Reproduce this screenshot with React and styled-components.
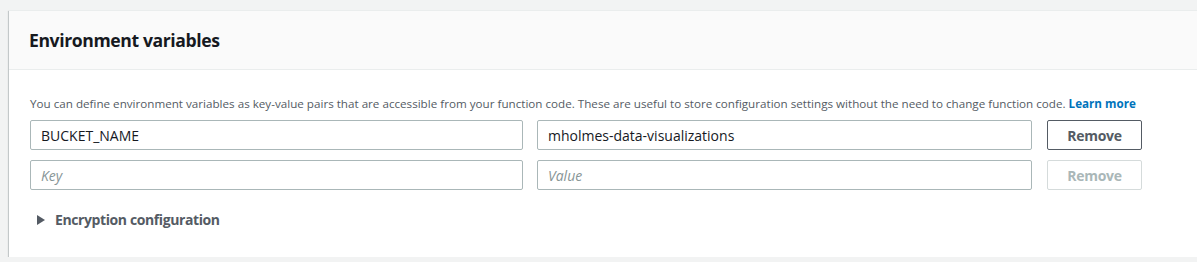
import React from 'react';
import styled, { createGlobalStyle } from 'styled-components';

const GlobalStyle = createGlobalStyle`
  body {
    margin: 0;
    background: #f2f3f3;
    font-family: "Open Sans", "Liberation Sans", sans-serif;
    overflow: hidden;
  }
`;

const Page = styled.div`
  padding: 10px 0 0 9px;
  width: 1220px;
`;

const Panel = styled.section`
  background: #fff;
  border-top: 1px solid #eaeded;
  box-shadow: 0 1px 1px 0 rgba(0, 28, 36, 0.3), 1px 1px 1px 0 rgba(0, 28, 36, 0.15),
    -1px 1px 1px 0 rgba(0, 28, 36, 0.15);
`;

const Header = styled.header`
  display: flex;
  align-items: center;
  height: 58px;
  padding: 0 20px;
  background: #fafafa;
  border-bottom: 1px solid #eaeded;

  h2 {
    margin: 0;
    font-size: 17.6px;
    font-weight: 700;
    color: #16191f;
    letter-spacing: -0.4px;
  }
`;

const Body = styled.div`
  padding: 25px 20px 27px 21px;
`;

const Description = styled.p`
  margin: 0 0 8px;
  font-size: 11.65px;
  line-height: 17px;
  color: #545b64;

  a {
    color: #0073bb;
    font-weight: 700;
    text-decoration: none;
  }
`;

const VarGrid = styled.div`
  display: grid;
  grid-template-columns: 493px 495px 96px;
  column-gap: 14px;
  row-gap: 10px;
`;

const TextInput = styled.input`
  box-sizing: border-box;
  height: 30px;
  width: 100%;
  padding: 0 10px;
  border: 1px solid #aab7b8;
  border-radius: 2px;
  background: #fff;
  font-family: inherit;
  font-size: 14px;
  color: #16191f;
  outline: none;

  &::placeholder {
    color: #879596;
    font-style: italic;
  }
`;

const RemoveButton = styled.button`
  box-sizing: border-box;
  height: 30px;
  margin-left: 1px;
  border: 1px solid ${({ disabled }) => (disabled ? '#d5dbdb' : '#545b64')};
  border-radius: 2px;
  background: #fff;
  font-family: inherit;
  font-size: 14px;
  font-weight: 700;
  letter-spacing: -0.3px;
  color: ${({ disabled }) => (disabled ? '#aab7b8' : '#545b64')};
  cursor: ${({ disabled }) => (disabled ? 'default' : 'pointer')};
`;

const Expander = styled.div`
  display: flex;
  align-items: center;
  gap: 10px;
  margin-top: 20px;
  padding-left: 7px;
  font-size: 14px;
  line-height: 20px;
  font-weight: 700;
  letter-spacing: -0.4px;
  color: #545b64;
`;

const Caret = styled.span`
  width: 0;
  height: 0;
  border-top: 5px solid transparent;
  border-bottom: 5px solid transparent;
  border-left: 8px solid #545b64;
`;

const vars = [
  { key: 'BUCKET_NAME', value: 'mholmes-data-visualizations' },
  { key: '', value: '', empty: true },
];

const App = () => (
  <Page>
    <GlobalStyle />
    <Panel>
      <Header>
        <h2>Environment variables</h2>
      </Header>
      <Body>
        <Description>
          You can define environment variables as key-value pairs that are accessible from your function code. These are
          useful to store configuration settings without the need to change function code. <a href="#">Learn more</a>
        </Description>
        <VarGrid>
          {vars.map((v, i) => (
            <React.Fragment key={i}>
              <TextInput defaultValue={v.key} placeholder="Key" />
              <TextInput defaultValue={v.value} placeholder="Value" />
              <RemoveButton disabled={v.empty}>Remove</RemoveButton>
            </React.Fragment>
          ))}
        </VarGrid>
        <Expander>
          <Caret />
          Encryption configuration
        </Expander>
      </Body>
    </Panel>
  </Page>
);

export default App;
